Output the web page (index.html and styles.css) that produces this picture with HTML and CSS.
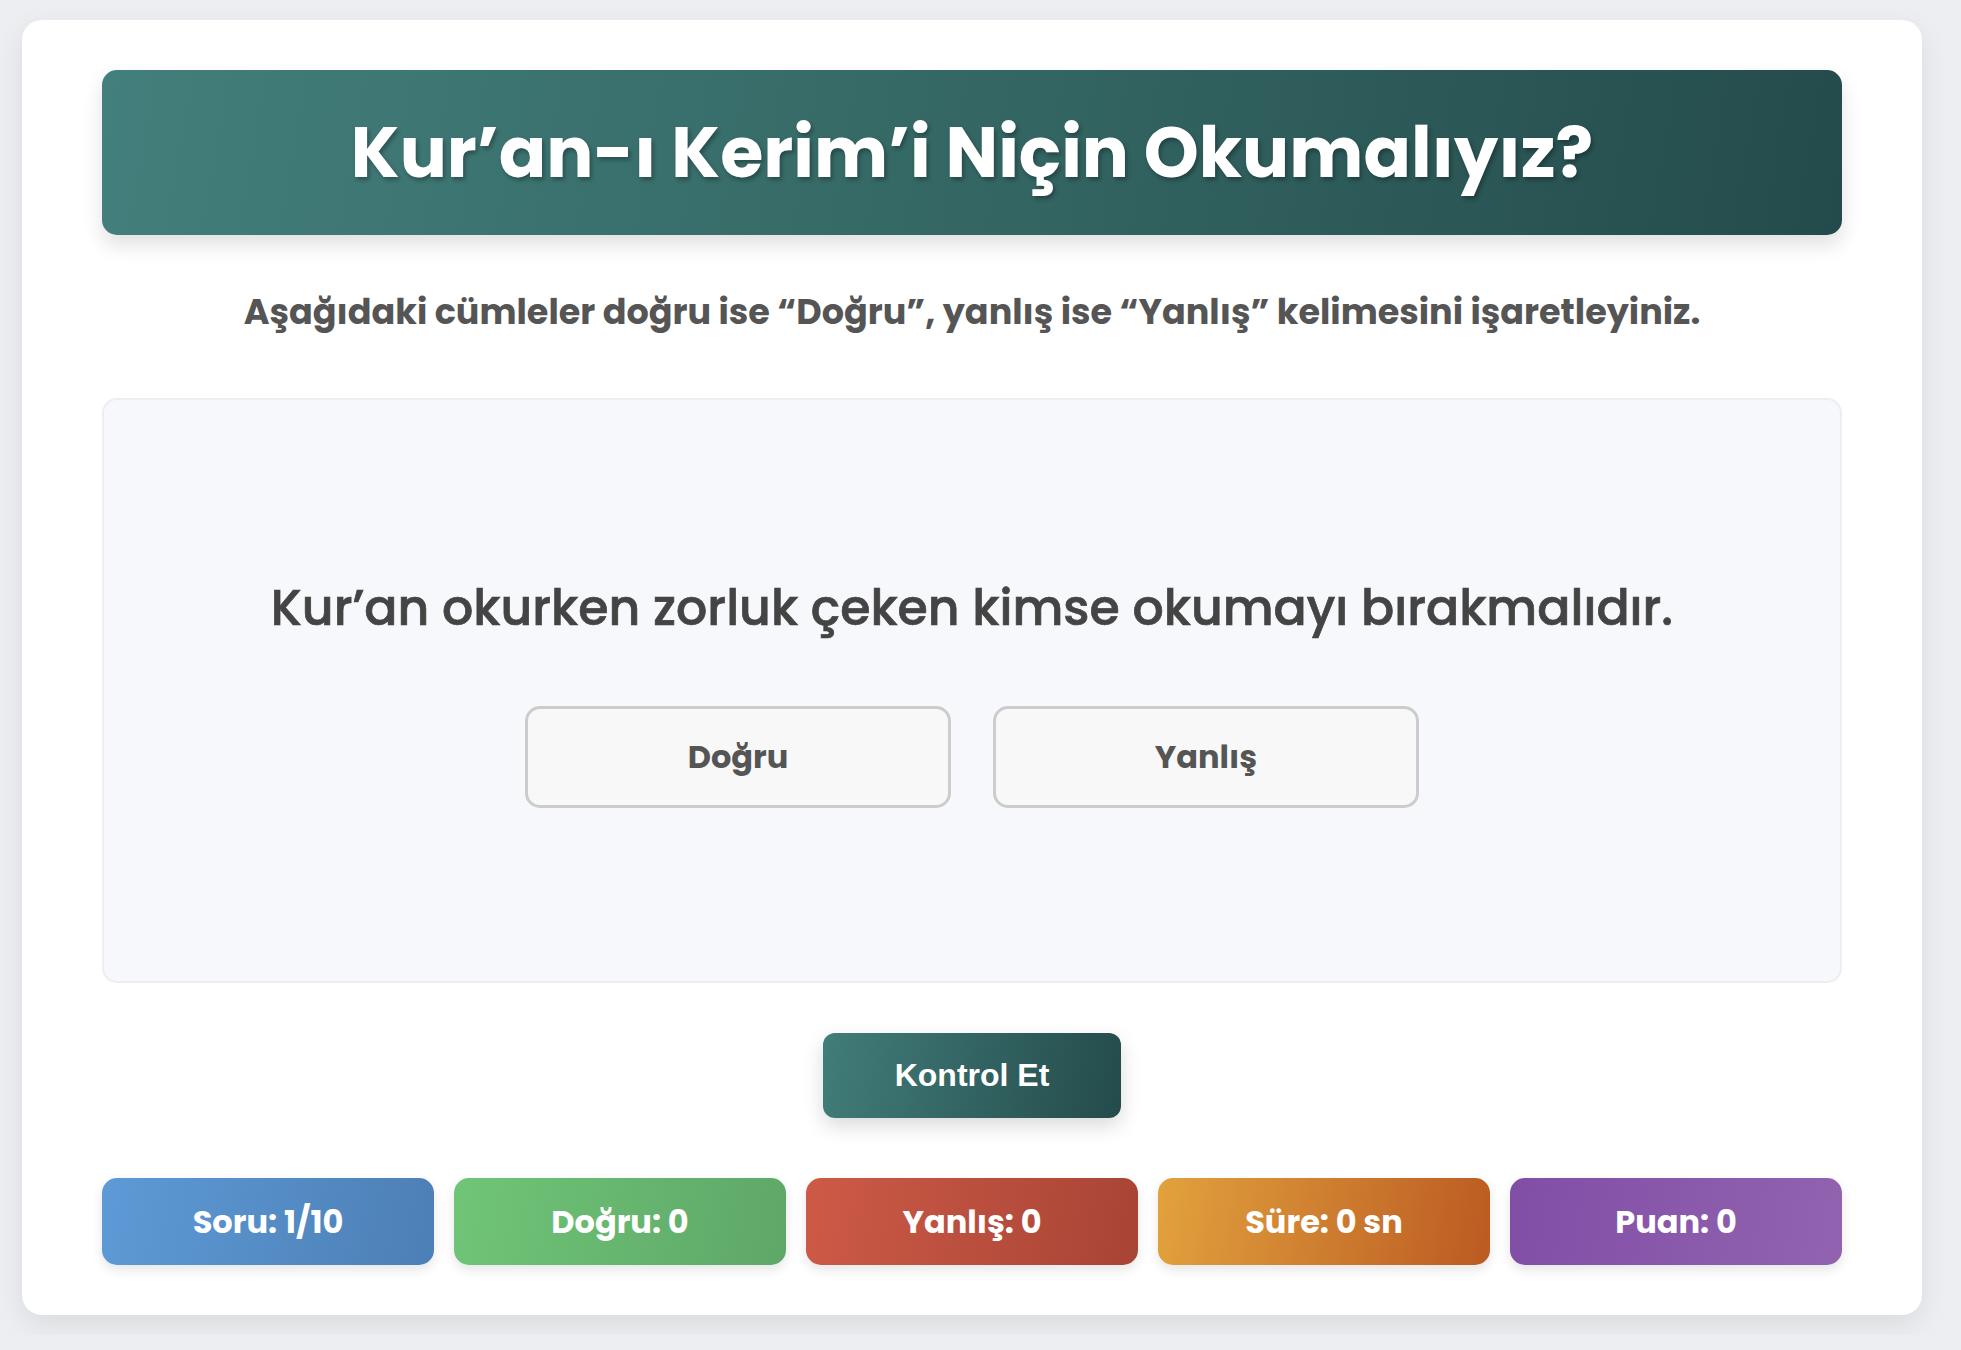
FILE: index.html
```html
<!DOCTYPE html>
<html lang="tr">

<head>
    <meta charset="UTF-8">
    <meta name="viewport" content="width=device-width, initial-scale=1.0">
    <title>Kur'an-ı Kerim'i Niçin Okumalıyız?</title>
    <link rel="stylesheet" href="styles.css">
</head>

<body>

    <div class="container">
        <h1 class="baslik">Kur’an-ı Kerim’i Niçin Okumalıyız?</h1>

        <p class="aciklama">Aşağıdaki cümleler doğru ise “Doğru”, yanlış ise “Yanlış” kelimesini işaretleyiniz.</p>

        <div class="soru-kutusu">
            <div class="soru-metni">Kur’an okurken zorluk çeken kimse okumayı bırakmalıdır.</div>
            <div class="secenekler">
                <button class="secenek">Doğru</button>
                <button class="secenek">Yanlış</button>
            </div>
        </div>

        <div class="kontrol-alani">
            <button class="kontrol-btn">Kontrol Et</button>
        </div>

        <div class="istatistik">
            <div class="kutu soru">Soru: 1/10</div>
            <div class="kutu dogru">Doğru: 0</div>
            <div class="kutu yanlis">Yanlış: 0</div>
            <div class="kutu sure">Süre: 0 sn</div>
            <div class="kutu puan">Puan: 0</div>
        </div>
    </div>

</body>

</html>
```

FILE: styles.css
```css
* {
    box-sizing: border-box;
}

body {
    margin: 0;
    padding: 20px 22px;
    background-color: #edeef2;
    font-family: "Poppins", "DejaVu Sans", sans-serif;
}

.container {
    width: 1900px;
    padding: 50px 80px;
    background-color: #fff;
    border-radius: 20px;
    box-shadow: 0 10px 30px rgba(0, 0, 0, 0.08);
}

.baslik {
    margin: 0;
    padding: 33px 20px;
    font-size: 70px;
    line-height: 99px;
    font-weight: 700;
    text-align: center;
    color: #fff;
    background: linear-gradient(100deg, #437f7c 0%, #346764 50%, #244b4b 100%);
    border-radius: 15px;
    box-shadow: 0 10px 20px rgba(0, 0, 0, 0.12);
    text-shadow: 2px 3px 4px rgba(0, 0, 0, 0.3);
}

.aciklama {
    margin: 52px 0 62px;
    font-size: 35px;
    line-height: 49px;
    font-weight: 700;
    text-align: center;
    color: #555;
}

.soru-kutusu {
    min-height: 585px;
    display: flex;
    flex-direction: column;
    justify-content: center;
    align-items: center;
    background-color: #f6f8fb;
    border: 2px solid #eeeeee;
    border-radius: 15px;
}

.soru-metni {
    margin-bottom: 63px;
    font-size: 49px;
    line-height: 70px;
    font-weight: 500;
    color: #444;
    -webkit-text-stroke: 0.7px #444;
}

.secenekler {
    display: flex;
    gap: 42px;
}

.secenek {
    width: 426px;
    height: 102px;
    font-family: inherit;
    font-size: 32px;
    font-weight: 700;
    color: #555;
    background-color: #f8f8f8;
    border: 3px solid #cccccc;
    border-radius: 15px;
    cursor: pointer;
}

.kontrol-alani {
    display: flex;
    justify-content: center;
    margin: 50px 0 60px;
}

.kontrol-btn {
    padding: 24px 72px;
    font-family: "Liberation Sans", Arial, sans-serif;
    font-size: 32px;
    font-weight: 700;
    color: #fff;
    background: linear-gradient(100deg, #417d7a 0%, #244b4b 100%);
    border: none;
    border-radius: 12px;
    box-shadow: 0 8px 20px rgba(0, 0, 0, 0.15);
    cursor: pointer;
}

.istatistik {
    display: grid;
    grid-template-columns: repeat(5, 1fr);
    gap: 20px;
}

.kutu {
    height: 87px;
    display: flex;
    align-items: center;
    justify-content: center;
    font-size: 32px;
    font-weight: 700;
    color: #fff;
    border-radius: 15px;
    box-shadow: 0 5px 12px rgba(0, 0, 0, 0.1);
}

.soru {
    background: linear-gradient(100deg, #5e9ad6 0%, #4c7fb5 100%);
}

.dogru {
    background: linear-gradient(100deg, #70c577 0%, #5ea768 100%);
}

.yanlis {
    background: linear-gradient(100deg, #cd5a47 0%, #a84435 100%);
}

.sure {
    background: linear-gradient(100deg, #e2a23d 0%, #bb5a22 100%);
}

.puan {
    background: linear-gradient(100deg, #814ea6 0%, #9163b0 100%);
}
```
